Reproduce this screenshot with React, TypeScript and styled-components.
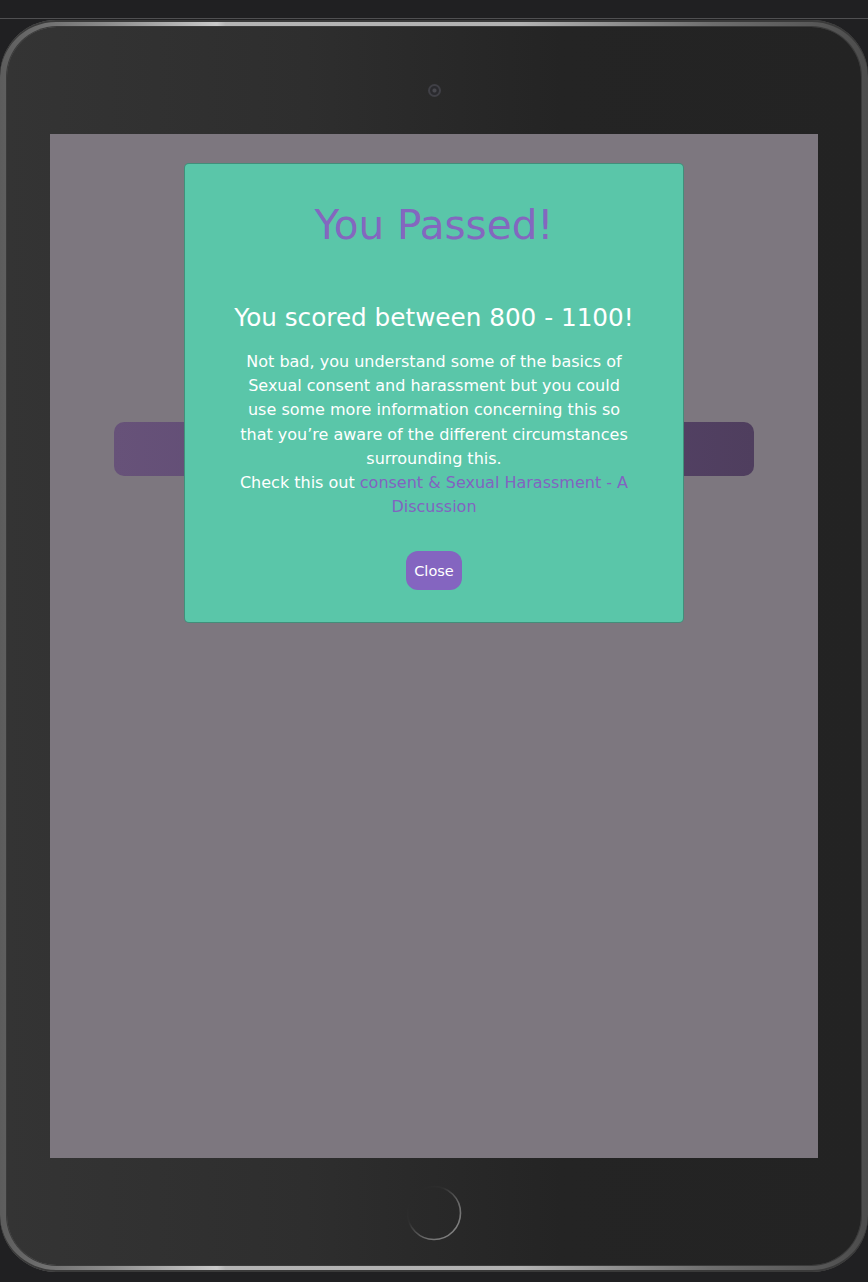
import React from "react";
import styled, { createGlobalStyle } from "styled-components";

const GlobalStyle = createGlobalStyle`
  html, body {
    margin: 0;
    padding: 0;
    background: #202022;
  }
  body {
    font-family: "DejaVu Sans", "Open Sans", Arial, sans-serif;
  }
`;

const Page = styled.div`
  width: 868px;
  height: 1282px;
  padding-top: 18px;
  box-sizing: border-box;
  overflow: hidden;
`;

const TopRule = styled.div`
  height: 1px;
  background: #505052;
  margin-bottom: 1px;
`;

const Tablet = styled.div`
  width: 868px;
  height: 1252px;
  box-sizing: border-box;
  padding: 7px;
  border-radius: 56px;
  background: linear-gradient(
    90deg,
    #5c5c5c 0%,
    #8a8a8a 12%,
    #c9c9c9 25%,
    #b4b4b4 26%,
    #b2b2b2 60%,
    #6e6e6e 82%,
    #4c4c4c 100%
  );
  box-shadow: inset 0 2px 0 #3a3a3a, inset 0 -2px 0 #3a3a3a;
`;

const Bezel = styled.div`
  height: 100%;
  box-sizing: border-box;
  border-radius: 50px;
  background: linear-gradient(90deg, #343434 0%, #2e2e2e 35%, #242424 65%, #232323 100%);
  box-shadow: 0 0 0 1px #3a3a3a;
  display: flex;
  flex-direction: column;
  align-items: center;
  padding-top: 57px;
`;

const Camera = styled.div`
  width: 13px;
  height: 13px;
  box-sizing: border-box;
  border-radius: 50%;
  border: 2.5px solid #404046;
  background: radial-gradient(circle, #48484e 0 1.5px, #2a2a2e 2.5px);
  filter: blur(0.4px);
`;

const Screen = styled.div`
  position: relative;
  margin-top: 37px;
  width: 768px;
  height: 1024px;
  background: #7d777f;
  display: flex;
  flex-direction: column;
  align-items: center;
  padding-top: 288px;
  box-sizing: border-box;
`;

const ContentBar = styled.div`
  width: 640px;
  height: 54px;
  border-radius: 10px;
  background: linear-gradient(90deg, #675279 0%, #5a4770 50%, #4f3e5e 100%);
`;

const Modal = styled.div`
  position: absolute;
  top: 29px;
  left: 50%;
  transform: translateX(-50%);
  width: 500px;
  box-sizing: border-box;
  background: #5ac6a9;
  border: 1px solid rgba(0, 0, 0, 0.28);
  border-radius: 5px;
  padding: 37px 6px 32px;
  display: flex;
  flex-direction: column;
  align-items: center;
  text-align: center;
`;

const Title = styled.h1`
  margin: 0;
  font-size: 40.5px;
  line-height: 48px;
  font-weight: 400;
  color: #8467bf;
`;

const Score = styled.h4`
  margin: 54px 0 0;
  font-size: 24.7px;
  line-height: 30px;
  font-weight: 400;
  color: #ffffff;
`;

const Message = styled.p`
  margin: 17px 0 0;
  font-size: 16px;
  line-height: 24.2px;
  font-weight: 400;
  color: #ffffff;
`;

const Link = styled.a`
  color: #8264c0;
  text-decoration: none;
`;

const CloseButton = styled.button`
  margin-top: 32px;
  height: 39px;
  padding: 0 8px;
  border: none;
  border-radius: 12px;
  background: #8465c0;
  color: #ffffff;
  font-family: inherit;
  font-size: 14.5px;
  font-weight: 400;
  cursor: pointer;
`;

const HomeButton = styled.svg`
  margin-top: 27px;
  width: 56px;
  height: 56px;
  display: block;
`;

export default function App() {
  return (
    <>
      <GlobalStyle />
      <Page>
        <TopRule />
        <Tablet>
          <Bezel>
            <Camera />
            <Screen>
              <ContentBar />
              <Modal>
                <Title>You Passed!</Title>
                <Score>You scored between 800 - 1100!</Score>
                <Message>
                  Not bad, you understand some of the basics of
                  <br />
                  Sexual consent and harassment but you could
                  <br />
                  use some more information concerning this so
                  <br />
                  that you’re aware of the different circumstances
                  <br />
                  surrounding this.
                  <br />
                  Check this out <Link href="#">consent &amp; Sexual Harassment - A</Link>
                  <br />
                  <Link href="#">Discussion</Link>
                </Message>
                <CloseButton>Close</CloseButton>
              </Modal>
            </Screen>
            <HomeButton viewBox="0 0 56 56">
              <defs>
                <linearGradient id="homeRing" x1="0" y1="0" x2="1" y2="1">
                  <stop offset="0" stopColor="#262626" />
                  <stop offset="0.35" stopColor="#2e2e2e" />
                  <stop offset="0.65" stopColor="#6a6a6a" />
                  <stop offset="1" stopColor="#8e8e8e" />
                </linearGradient>
              </defs>
              <circle cx="28" cy="28" r="26.5" fill="none" stroke="url(#homeRing)" strokeWidth="1.6" />
            </HomeButton>
          </Bezel>
        </Tablet>
      </Page>
    </>
  );
}
